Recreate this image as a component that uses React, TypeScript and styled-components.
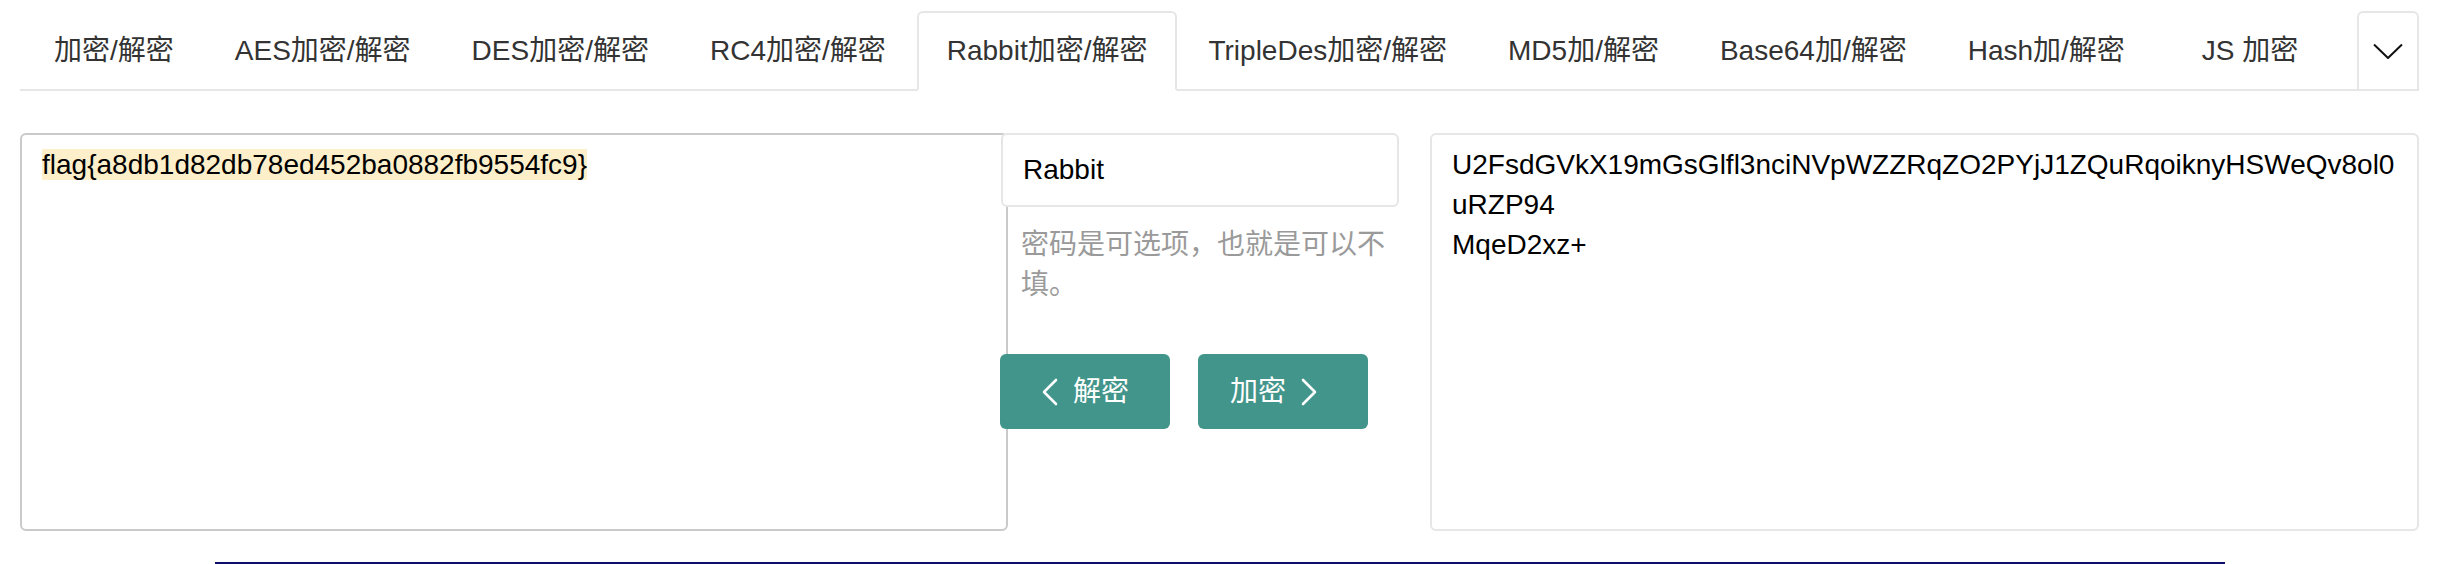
import React from "react";
import styled, { createGlobalStyle } from "styled-components";

const tabs = [
  { label: "加密/解密" },
  { label: "AES加密/解密" },
  { label: "DES加密/解密" },
  { label: "RC4加密/解密" },
  { label: "Rabbit加密/解密" },
  { label: "TripleDes加密/解密" },
  { label: "MD5加/解密" },
  { label: "Base64加/解密" },
  { label: "Hash加/解密" },
  { label: "JS 加密", indent: 16 },
];

const activeTab = 4;

const cipherLines = [
  "U2FsdGVkX19mGsGlfl3nciNVpWZZRqZO2PYjJ1ZQuRqoiknyHSWeQv8ol0",
  "uRZP94",
  "MqeD2xz+",
];

const Chevron = ({ dir }: { dir: "left" | "right" }) => (
  <svg width="18" height="28" viewBox="0 0 18 28" fill="none">
    <polyline
      points={dir === "left" ? "15,2 3,14 15,26" : "3,2 15,14 3,26"}
      stroke="#fff"
      strokeWidth="2.6"
      strokeLinecap="round"
      strokeLinejoin="round"
    />
  </svg>
);

const App = () => (
  <>
    <GlobalStyle />
    <Page>
      <TabBar>
        {tabs.map((tab, i) => (
          <Tab key={tab.label} $active={i === activeTab} $indent={tab.indent ?? 0}>
            {tab.label}
          </Tab>
        ))}
        <DropdownToggle>
          <svg width="30" height="17" viewBox="0 0 30 17" fill="none">
            <polyline
              points="1,1.5 15,15 29,1.5"
              stroke="#111"
              strokeWidth="2"
              strokeLinejoin="round"
            />
          </svg>
        </DropdownToggle>
      </TabBar>

      <Workspace>
        <InputColumn>
          <TextBox $border="#cacaca" $overhang>
            <Highlight>flag{"{"}a8db1d82db78ed452ba0882fb9554fc9{"}"}</Highlight>
          </TextBox>
        </InputColumn>

        <ControlColumn>
          <KeyInput defaultValue="Rabbit" />
          <Hint>密码是可选项，也就是可以不填。</Hint>
          <ButtonRow>
            <ActionButton $shift={0}>
              <Chevron dir="left" />
              解密
            </ActionButton>
            <ActionButton $shift={-9}>
              加密
              <Chevron dir="right" />
            </ActionButton>
          </ButtonRow>
        </ControlColumn>

        <OutputColumn>
          <TextBox $border="#e6e6e6">
            {cipherLines.map((line) => (
              <div key={line}>{line}</div>
            ))}
          </TextBox>
        </OutputColumn>
      </Workspace>

      <FooterRule />
    </Page>
  </>
);

export default App;

const GlobalStyle = createGlobalStyle`
  html, body {
    margin: 0;
    padding: 0;
    background: #fff;
  }
  body {
    font-family: "Liberation Sans", "Noto Sans CJK SC", sans-serif;
    font-size: 28px;
    line-height: 40px;
    color: #000;
  }
  * {
    box-sizing: border-box;
  }
`;

const Page = styled.div`
  width: 2448px;
  height: 564px;
  overflow: hidden;
  padding: 11px 29px 0 20px;
`;

const TabBar = styled.ul`
  display: flex;
  align-items: flex-end;
  list-style: none;
  margin: 0;
  padding: 0 0 0 4px;
  border-bottom: 2px solid #e6e6e6;
`;

const Tab = styled.li<{ $active?: boolean; $indent: number }>`
  margin: 0 1px -2px 0;
  padding: 18px 28px 18px ${({ $indent }) => 28 + $indent}px;
  font-size: 28px;
  line-height: 40px;
  color: #333;
  white-space: nowrap;
  border: 2px solid transparent;
  border-radius: 6px 6px 0 0;
  background: ${({ $active }) => ($active ? "#fff" : "transparent")};
  border-color: ${({ $active }) =>
    $active ? "#e6e6e6 #e6e6e6 transparent" : "transparent"};
`;

const DropdownToggle = styled.li`
  margin: 0 0 -2px auto;
  width: 62px;
  height: 80px;
  display: flex;
  align-items: center;
  justify-content: center;
  border: 2px solid #e6e6e6;
  border-radius: 6px 6px 0 0;
  background: #fff;
`;

const Workspace = styled.div`
  display: flex;
  margin-top: 42px;
  height: 398px;
`;

const InputColumn = styled.div`
  flex: 0 0 980px;
`;

const ControlColumn = styled.div`
  flex: 0 0 400px;
  margin-right: 30px;
  position: relative;
`;

const OutputColumn = styled.div`
  flex: 1;
`;

const TextBox = styled.div<{ $border: string; $overhang?: boolean }>`
  width: ${({ $overhang }) => ($overhang ? "calc(100% + 8px)" : "100%")};
  height: 100%;
  padding: 10px 20px;
  border: 2px solid ${({ $border }) => $border};
  border-radius: 6px;
  font-size: 28px;
  line-height: 40px;
  color: #000;
  background: #fff;
  word-break: break-all;
`;

const Highlight = styled.span`
  background: #fcefca;
`;

const KeyInput = styled.input`
  display: block;
  width: 398px;
  height: 74px;
  margin-left: 1px;
  padding: 0 20px;
  border: 2px solid #e6e6e6;
  border-radius: 6px;
  font-family: "Liberation Sans", "Noto Sans CJK SC", sans-serif;
  font-size: 28px;
  color: #000;
  background: #fff;
  outline: none;
`;

const Hint = styled.p`
  margin: 18px 0 0;
  padding-left: 21px;
  width: 392px;
  font-size: 28px;
  line-height: 40px;
  color: #9a9a9a;
`;

const ButtonRow = styled.div`
  display: flex;
  gap: 28px;
  margin-top: 49px;
`;

const ActionButton = styled.button<{ $shift: number }>`
  width: 170px;
  height: 75px;
  display: flex;
  align-items: center;
  justify-content: center;
  gap: 14px;
  padding: 0;
  padding-right: ${({ $shift }) => -$shift * 2}px;
  border: none;
  border-radius: 6px;
  background: #42958a;
  color: #fff;
  font-family: "Liberation Sans", "Noto Sans CJK SC", sans-serif;
  font-size: 28px;
  line-height: 40px;
`;

const FooterRule = styled.div`
  margin: 31px 0 0 195px;
  width: 2010px;
  height: 20px;
  border-top: 3px solid #0d0d6b;
`;
